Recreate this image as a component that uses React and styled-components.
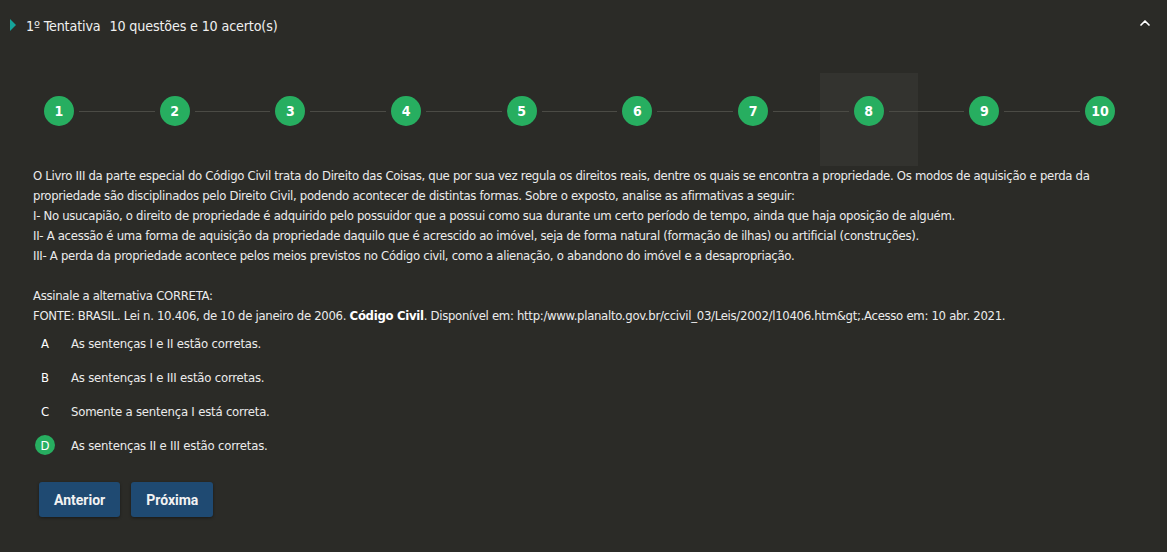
import React from "react";
import styled, { createGlobalStyle } from "styled-components";
import { ChevronUp } from "lucide-react";

const GlobalStyle = createGlobalStyle`
  html, body {
    margin: 0;
    padding: 0;
    background: #2b2b27;
  }
  body {
    font-family: "DejaVu Sans Condensed", "Liberation Sans", sans-serif;
    color: #ececec;
  }
`;

const steps = [1, 2, 3, 4, 5, 6, 7, 8, 9, 10];

const options = [
  { letter: "A", text: "As sentenças I e II estão corretas." },
  { letter: "B", text: "As sentenças I e III estão corretas." },
  { letter: "C", text: "Somente a sentença I está correta." },
  { letter: "D", text: "As sentenças II e III estão corretas.", selected: true },
];

const App = () => {
  return (
    <Panel>
      <GlobalStyle />
      <Header>
        <Title>
          <Caret />
          <span>1º Tentativa</span>
          <span>10 questões e 10 acerto(s)</span>
        </Title>
        <Toggle>
          <ChevronUp size={16} strokeWidth={2.6} />
        </Toggle>
      </Header>

      <Stepper>
        {steps.map((n, i) => (
          <React.Fragment key={n}>
            {i > 0 && <Connector />}
            <Step $active={n === 8}>
              <Dot>{n}</Dot>
            </Step>
          </React.Fragment>
        ))}
      </Stepper>

      <Question>
        <p>
          O Livro III da parte especial do Código Civil trata do Direito das Coisas, que por sua vez regula os direitos reais, dentre os quais se encontra a propriedade. Os modos de aquisição e perda da propriedade são disciplinados pelo Direito Civil, podendo acontecer de distintas formas. Sobre o exposto, analise as afirmativas a seguir:
          <br />
          I- No usucapião, o direito de propriedade é adquirido pelo possuidor que a possui como sua durante um certo período de tempo, ainda que haja oposição de alguém.
          <br />
          II- A acessão é uma forma de aquisição da propriedade daquilo que é acrescido ao imóvel, seja de forma natural (formação de ilhas) ou artificial (construções).
          <br />
          III- A perda da propriedade acontece pelos meios previstos no Código civil, como a alienação, o abandono do imóvel e a desapropriação.
        </p>
        <p>
          Assinale a alternativa CORRETA:
          <br />
          FONTE: BRASIL. Lei n. 10.406, de 10 de janeiro de 2006. <strong>Código Civil</strong>. Disponível em: http:/www.planalto.gov.br/ccivil_03/Leis/2002/l10406.htm&amp;gt;.Acesso em: 10 abr. 2021.
        </p>
      </Question>

      <Options>
        {options.map((o) => (
          <Option key={o.letter}>
            <Letter $selected={o.selected}>{o.letter}</Letter>
            <span>{o.text}</span>
          </Option>
        ))}
      </Options>

      <Actions>
        <Button>Anterior</Button>
        <Button>Próxima</Button>
      </Actions>
    </Panel>
  );
};

const Panel = styled.div`
  width: 1167px;
  height: 552px;
  box-sizing: border-box;
  background: #2b2b27;
  overflow: hidden;
`;

const Header = styled.div`
  height: 52px;
  display: flex;
  align-items: center;
  justify-content: space-between;
  padding: 0 14px 0 10px;
`;

const Title = styled.div`
  display: flex;
  align-items: center;
  font-size: 14.2px;
  letter-spacing: -0.15px;
  color: #f0f0f0;
  span + span {
    margin-left: 9px;
  }
`;

const Caret = styled.i`
  width: 0;
  height: 0;
  border-top: 6px solid transparent;
  border-bottom: 6px solid transparent;
  border-left: 6.5px solid #15a39a;
  margin-right: 10px;
  margin-top: -3px;
`;

const Toggle = styled.div`
  display: flex;
  color: #fff;
  margin-top: -6px;
`;

const Stepper = styled.div`
  display: flex;
  align-items: center;
  padding: 44px 52px 0 44px;
  height: 30px;
`;

const Connector = styled.div`
  flex: 1;
  height: 1px;
  margin: 0 5px;
  background: #4b4b45;
  position: relative;
  z-index: 1;
`;

const Step = styled.div`
  padding: ${(p) => (p.$active ? "23px 34px 40px" : "0")};
  margin: ${(p) => (p.$active ? "-23px -34px -40px" : "0")};
  background: ${(p) => (p.$active ? "#33332f" : "transparent")};
  display: flex;
`;

const Dot = styled.div`
  width: 30px;
  height: 30px;
  border-radius: 50%;
  background: #27ae60;
  color: #fff;
  display: flex;
  align-items: center;
  justify-content: center;
  font-family: "DejaVu Sans Condensed", "DejaVu Sans", sans-serif;
  font-weight: 700;
  font-size: 14px;
  position: relative;
  z-index: 2;
`;

const Question = styled.div`
  padding: 40px 20px 0 33px;
  font-size: 13px;
  letter-spacing: -0.3px;
  line-height: 20px;
  color: #ececec;
  p {
    margin: 0 0 20px;
  }
  p:last-child {
    margin: 0;
  }
  strong {
    font-weight: 700;
    color: #fff;
  }
`;

const Options = styled.div`
  display: flex;
  flex-direction: column;
  gap: 14px;
  padding: 7px 0 0 35px;
`;

const Option = styled.div`
  display: flex;
  align-items: center;
  font-size: 13px;
  letter-spacing: -0.2px;
  color: #ececec;
  height: 20px;
`;

const Letter = styled.span`
  width: 20px;
  height: 20px;
  border-radius: 50%;
  display: flex;
  align-items: center;
  justify-content: center;
  margin-right: 16px;
  background: ${(p) => (p.$selected ? "#27ae60" : "transparent")};
  color: #fff;
`;

const Actions = styled.div`
  display: flex;
  gap: 11px;
  padding: 27px 0 0 39px;
`;

const Button = styled.button`
  height: 35px;
  padding: 0 15px;
  border: none;
  border-radius: 3px;
  background: #1f4a72;
  color: #f2f2f2;
  font-family: Roboto, "Liberation Sans", sans-serif;
  font-weight: 700;
  font-size: 14px;
  box-shadow: 0 1px 3px rgba(0, 0, 0, 0.4);
  cursor: pointer;
`;

export default App;
